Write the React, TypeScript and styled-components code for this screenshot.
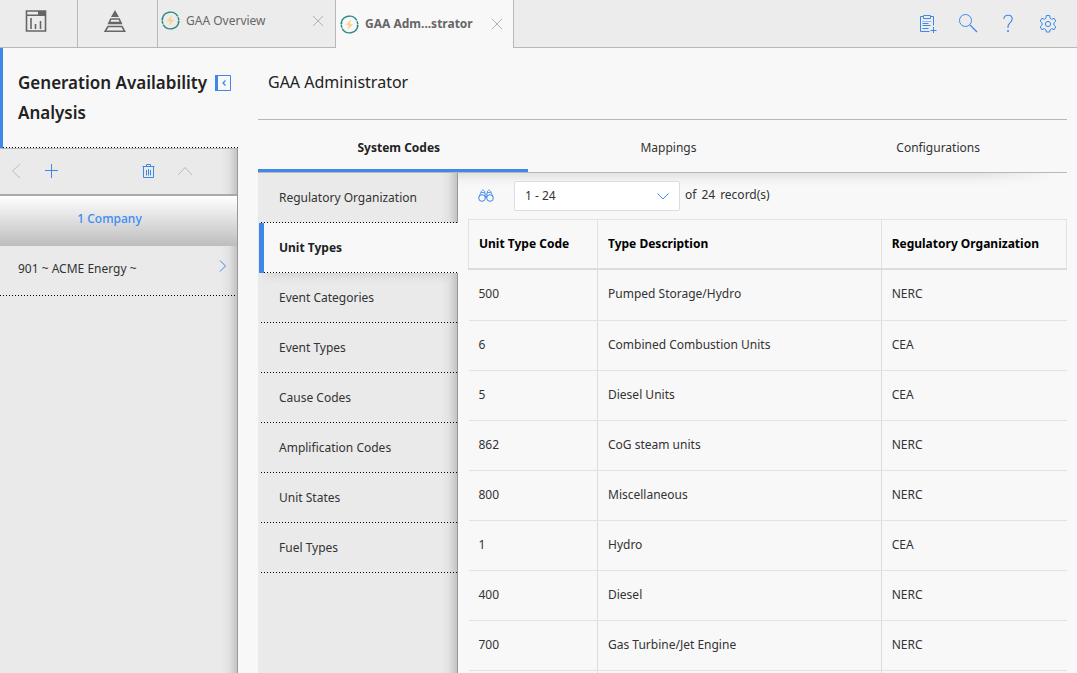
import React from "react";
import styled, { createGlobalStyle, css } from "styled-components";

const blue = "#3f87e8";
const line = "#b8b8b8";

const GlobalStyle = createGlobalStyle`
  *, *::before, *::after { box-sizing: border-box; }
  body {
    margin: 0;
    background: #f8f8f8;
    color: #333;
    font-family: "Noto Sans", sans-serif;
    font-size: 12px;
    line-height: 20px;
  }
  button, select { font: inherit; color: inherit; }
  button { border: 0; padding: 0; background: none; cursor: pointer; }
  svg { display: block; flex: none; }
  h1, h2 { margin: 0; }
`;

const Page = styled.div`
  display: flex;
  flex-direction: column;
  height: 100vh;
  overflow: hidden;
`;

const TopBar = styled.header`
  display: flex;
  flex: none;
  height: 48px;
  background: #ececec;
`;

const LauncherButton = styled.button<{ $width: number }>`
  display: flex;
  align-items: center;
  justify-content: center;
  width: ${(p) => p.$width}px;
  padding: 0 5px 6px 0;
  border-right: 1px solid ${line};
  border-bottom: 1px solid ${line};
`;

const AppTab = styled.div<{ $active?: boolean }>`
  display: flex;
  align-items: center;
  width: 178px;
  padding: 0 11px 6px 3px;
  border-right: 1px solid ${line};
  border-bottom: 1px solid ${line};
  color: #666;
  ${(p) =>
    p.$active &&
    css`
      padding: 0 10px 0 4px;
      border-bottom: 0;
      background: #f8f8f8;
      font-weight: 700;
    `}
`;

const AppTabLabel = styled.button`
  display: flex;
  flex: 1;
  align-items: center;
  gap: 6px;
  white-space: nowrap;
`;

const TopActions = styled.div`
  display: flex;
  flex: 1;
  justify-content: flex-end;
  padding-right: 9px;
  border-bottom: 1px solid ${line};
`;

const IconButton = styled.button<{ $width?: number; $muted?: boolean }>`
  display: flex;
  flex: none;
  align-items: center;
  justify-content: center;
  width: ${(p) => p.$width ?? 40}px;
  color: ${(p) => (p.$muted ? "#bcbcbc" : blue)};
`;

const Body = styled.div`
  display: flex;
  flex: 1;
  min-height: 0;
`;

const sideShade = css`
  border-right: 1px solid #999;
  background: linear-gradient(to left, rgba(0, 0, 0, 0.17), rgba(0, 0, 0, 0.04) 8px, transparent 16px) #eaeaea;
`;

const Sidebar = styled.aside`
  display: flex;
  flex: none;
  flex-direction: column;
  width: 238px;
`;

const dots = css`
  background-image: linear-gradient(to right, #000 1px, transparent 1px);
  background-position: left bottom;
  background-size: 3px 1px;
  background-repeat: repeat-x;
`;

const SidebarTitle = styled.div`
  display: flex;
  align-items: flex-start;
  justify-content: space-between;
  height: 100px;
  padding: 20px 7px 0 15px;
  border-left: 3px solid ${blue};
  ${dots}
`;

const ModuleName = styled.h1`
  color: #222;
  font-size: 17px;
  font-weight: 600;
  line-height: 30px;
`;

const CollapseButton = styled.button`
  padding-top: 7px;
  color: ${blue};
`;

const SidePanel = styled.div`
  flex: 1;
  ${sideShade}
`;

const SideToolbar = styled.div`
  display: flex;
  gap: 4px;
  height: 48px;
  padding: 0 36px 2px 0;
  border-top: 1px solid ${line};
  border-bottom: 2px solid #aaa;
`;

const ToolbarSpacer = styled.span`
  flex: 1;
`;

const LevelHeading = styled.h2`
  height: 50px;
  padding: 13px 18px 0 0;
  background: linear-gradient(#fff, #bdbdbd);
  color: #3b8cf5;
  font-size: 12px;
  font-weight: 500;
  line-height: 20px;
  text-align: center;
`;

const CompanyRow = styled.button`
  display: flex;
  align-items: center;
  justify-content: space-between;
  width: 100%;
  height: 50px;
  padding: 0 9px 4px 18px;
  text-align: left;
  ${dots}
`;

const RowArrow = styled.span`
  padding-bottom: 6px;
  color: ${blue};
`;

const Main = styled.main`
  display: flex;
  flex: 1;
  flex-direction: column;
  min-width: 0;
  padding: 0 10px 0 20px;
`;

const PageTitle = styled.h2`
  flex: none;
  height: 72px;
  padding: 24px 10px 0;
  border-bottom: 1px solid ${line};
  color: #222;
  font-size: 16px;
  font-weight: 400;
  line-height: 20px;
`;

const SectionTabs = styled.div`
  display: grid;
  flex: none;
  grid-template-columns: repeat(3, 1fr);
  height: 53px;
  border-bottom: 1px solid ${line};
`;

const SectionTab = styled.button<{ $active?: boolean }>`
  padding: 6px 0 0 12px;
  border-bottom: 3px solid ${(p) => (p.$active ? blue : "transparent")};
  color: ${(p) => (p.$active ? "#222" : "#333")};
  font-weight: ${(p) => (p.$active ? 700 : 400)};
`;

const Section = styled.div`
  display: flex;
  flex: 1;
  min-height: 0;
`;

const CodeNav = styled.nav`
  flex: none;
  width: 200px;
  padding-left: 1px;
  ${sideShade}
`;

const CodeItem = styled.button<{ $active?: boolean }>`
  display: block;
  width: calc(100% - 2px);
  height: 50px;
  margin-left: 2px;
  padding-left: 18px;
  text-align: left;
  ${dots}
  ${(p) =>
    p.$active &&
    css`
      width: calc(100% + 1px);
      margin-left: 0;
      padding-left: 15px;
      border-left: 5px solid ${blue};
      background-color: #f8f8f8;
      box-shadow: 0 10px 10px -8px rgba(0, 0, 0, 0.12);
      color: #222;
      font-weight: 700;
    `}
`;

const Records = styled.section`
  flex: 1;
  min-width: 0;
  padding-left: 10px;
  background:
    linear-gradient(to right, transparent calc(100% - 90px), #f8f8f8 calc(100% - 10px)),
    linear-gradient(rgba(0, 0, 0, 0.09), rgba(0, 0, 0, 0.02) 8px, transparent 14px);
`;

const Pager = styled.div`
  display: flex;
  align-items: center;
  height: 46px;
`;

const SelectBox = styled.div`
  display: grid;
  align-items: center;
  width: 166px;
  margin: 0 5px 0 10px;
  color: ${blue};

  & > * { grid-area: 1 / 1; }
  & > svg { justify-self: end; margin-right: 11px; pointer-events: none; }
`;

const RangeSelect = styled.select`
  height: 30px;
  padding: 0 10px;
  border: 1px solid #ddd;
  border-radius: 2px;
  background: #fff;
  color: #333;
  appearance: none;
`;

const RecordCount = styled.span`
  display: flex;
  gap: 5px;
  padding-bottom: 2px;
`;

const Table = styled.table`
  width: 100%;
  border-collapse: collapse;
  table-layout: fixed;
`;

const HeadCell = styled.th<{ $width?: string }>`
  width: ${(p) => p.$width ?? "auto"};
  height: 49px;
  padding: 0 10px;
  border: 1px solid #e2e2e2;
  border-bottom: 2px solid #dcdcdc;
  color: #000;
  font-weight: 700;
  text-align: left;
`;

const Cell = styled.td`
  height: 50px;
  padding: 0 10px 2px;
  border-bottom: 1px solid #e2e2e2;

  & + & { border-left: 1px solid #dcdcdc; }
  tr:first-child > & { height: 52px; }
`;

const Stroke = ({ size, children }: { size: number; children: React.ReactNode }) => (
  <svg width={size} height={size} viewBox={`0 0 ${size} ${size}`} fill="none" stroke="currentColor" aria-hidden="true">
    {children}
  </svg>
);

const DashboardIcon = () => (
  <svg width="22" height="22" viewBox="0 0 22 22" aria-hidden="true">
    <path d="M1.5 1h19v20h-19z" fill="none" stroke="#666" strokeWidth="1.6" />
    <path d="M13 1h8v4h-8zM1 4.6h20v1.4H1z" fill="#666" />
    <path d="M6 8v11M10.500 14v5M15.500 11v8" stroke="#666" strokeWidth="1.6" />
  </svg>
);

const PyramidIcon = () => (
  <svg width="24" height="24" viewBox="0 0 24 24" aria-hidden="true">
    <path d="M12 1l4 7H8z" fill="#666" />
    <path d="M7.8 10h8.4l1.5 3.5H6.3zM5 17.5h14l2.6 4.7H2.2z" fill="none" stroke="#666" strokeWidth="1.6" />
    <path d="M5.5 13.5h13l1 1.8h-15z" fill="#666" />
  </svg>
);

const EnergyIcon = () => (
  <svg width="19" height="19" viewBox="0 0 19 19" aria-hidden="true">
    <g fill="none" stroke="#2b8a86" strokeWidth="1.4">
      <path d="M1.2 8.2A8.4 8.4 0 0 1 16.8 5.4M17.8 10.8A8.4 8.4 0 0 1 2.2 13.6" />
      <path d="M17.1 6.2l.8 3M1.9 12.8l-.8-3" />
    </g>
    <path d="M0 7.8h2.8L1.3 9.8zM19 11.2h-2.8l1.5-2z" fill="#2b8a86" />
    <path d="M10.8 4.5L5.8 10h3l-1 4.5L13.2 9h-3z" fill="#ffd184" />
  </svg>
);

const CloseIcon = () => (
  <svg width="12" height="12" viewBox="0 0 12 12" stroke="#b0b0b0" aria-hidden="true">
    <path d="M1 1l10 10M11 1L1 11" />
  </svg>
);

const ClipboardIcon = () => (
  <Stroke size={20}>
    <path d="M5.5 2.5h-3v15h9M12.5 2.5h3v9M5.5 1.5h7v3h-7zM4.5 9.5h6M4.5 11.5h8M4.5 14.5h6" />
    <path d="M4.5 7.5h9" opacity=".5" />
    <path d="M15.5 13v6M12.5 16.5h6" />
  </Stroke>
);

const SearchIcon = () => (
  <Stroke size={20}>
    <circle cx="7.5" cy="6.5" r="6" />
    <path d="M12 11l7 7" strokeWidth="1.3" />
  </Stroke>
);

const HelpIcon = () => (
  <Stroke size={20}>
    <path d="M5.8 5C6 2.6 7.6 1.2 10 1.2s4.2 1.5 4.2 3.8c0 3.400-4.200 3.800-4.200 7.700v1.300" strokeWidth="1.1" />
    <circle cx="10" cy="17" r="1" fill="currentColor" stroke="none" />
  </Stroke>
);

const GearIcon = () => (
  <Stroke size={20}>
    <path
      d="M8.3 1.5h3.4l.4 2.8 1.7 1 2.400-1 1.600 2.900-1.900 1.700v2.200l1.900 1.700-1.600 2.900-2.400-1-1.700 1-.4 2.300H8.300l-.4-2.300-1.700-1-2.400 1-1.600-2.900 1.900-1.700V8.900L2.200 7.200l1.600-2.900 2.400 1 1.700-1z"
      strokeLinejoin="round"
    />
    <circle cx="10" cy="10" r="2.6" />
  </Stroke>
);

const PanelIcon = () => (
  <Stroke size={16}>
    <path d="M.5.5h15v15H.5z" />
    <path d="M1.5 0v16" strokeWidth="3" />
    <path d="M10.5 5.5L8 8l2.5 2.5" strokeWidth="1.3" />
  </Stroke>
);

const LeftIcon = () => (
  <Stroke size={14}>
    <path d="M11 0L3.500 7l7.500 7" />
  </Stroke>
);

const UpIcon = () => (
  <Stroke size={16}>
    <path d="M1 12l7-7.5 7 7.5" />
  </Stroke>
);

const RightIcon = () => (
  <Stroke size={12}>
    <path d="M4 .5L9.5 6 4 11.5" />
  </Stroke>
);

const DownIcon = () => (
  <Stroke size={12}>
    <path d="M.5 3.5L6 9l5.5-5.5" />
  </Stroke>
);

const PlusIcon = () => (
  <Stroke size={14}>
    <path d="M6.5 0v14M0 6.5h13" stroke={blue} />
  </Stroke>
);

const TrashIcon = () => (
  <Stroke size={14}>
    <path d="M.5 2.5h12M4.5 2.5v-2h4v2M1.5 2.5v11h10v-11M4.5 6v5.500M6.500 5v6.500M8.500 6v5.500" />
  </Stroke>
);

const BinocularsIcon = () => (
  <Stroke size={16}>
    <circle cx="4" cy="10" r="3.3" />
    <circle cx="12" cy="10" r="3.3" />
    <path d="M1 9l2.500-6Q5 .5 6.500 3l1 6.500M15 9l-2.500-6Q11 .5 9.500 3l-1 6.500M3 4.500h4M13 4.500H9M7 6h2M7 9h2" strokeWidth=".8" />
  </Stroke>
);

const codeTypes = [
  "Regulatory Organization",
  "Unit Types",
  "Event Categories",
  "Event Types",
  "Cause Codes",
  "Amplification Codes",
  "Unit States",
  "Fuel Types",
];

const unitTypes = [
  ["500", "Pumped Storage/Hydro", "NERC"],
  ["6", "Combined Combustion Units", "CEA"],
  ["5", "Diesel Units", "CEA"],
  ["862", "CoG steam units", "NERC"],
  ["800", "Miscellaneous", "NERC"],
  ["1", "Hydro", "CEA"],
  ["400", "Diesel", "NERC"],
  ["700", "Gas Turbine/Jet Engine", "NERC"],
  ["", "", ""],
];

export default function App() {
  return (
    <Page>
      <GlobalStyle />
      <TopBar>
        <LauncherButton $width={78} aria-label="Dashboard"><DashboardIcon /></LauncherButton>
        <LauncherButton $width={80} aria-label="Hierarchy"><PyramidIcon /></LauncherButton>
        <AppTab>
          <AppTabLabel><EnergyIcon />GAA Overview</AppTabLabel>
          <button aria-label="Close GAA Overview"><CloseIcon /></button>
        </AppTab>
        <AppTab $active>
          <AppTabLabel><EnergyIcon />GAA Adm...strator</AppTabLabel>
          <button aria-label="Close GAA Administrator"><CloseIcon /></button>
        </AppTab>
        <TopActions>
          <IconButton aria-label="Add note"><ClipboardIcon /></IconButton>
          <IconButton aria-label="Search"><SearchIcon /></IconButton>
          <IconButton aria-label="Help"><HelpIcon /></IconButton>
          <IconButton aria-label="Settings"><GearIcon /></IconButton>
        </TopActions>
      </TopBar>
      <Body>
        <Sidebar>
          <SidebarTitle>
            <ModuleName>Generation Availability Analysis</ModuleName>
            <CollapseButton aria-label="Collapse panel"><PanelIcon /></CollapseButton>
          </SidebarTitle>
          <SidePanel>
            <SideToolbar>
              <IconButton $width={32} $muted aria-label="Back"><LeftIcon /></IconButton>
              <IconButton $width={32} aria-label="Add"><PlusIcon /></IconButton>
              <ToolbarSpacer />
              <IconButton $width={32} aria-label="Delete"><TrashIcon /></IconButton>
              <IconButton $width={32} $muted aria-label="Up"><UpIcon /></IconButton>
            </SideToolbar>
            <LevelHeading>1 Company</LevelHeading>
            <CompanyRow>
              901 ~ ACME Energy ~
              <RowArrow><RightIcon /></RowArrow>
            </CompanyRow>
          </SidePanel>
        </Sidebar>
        <Main>
          <PageTitle>GAA Administrator</PageTitle>
          <SectionTabs>
            <SectionTab $active>System Codes</SectionTab>
            <SectionTab>Mappings</SectionTab>
            <SectionTab>Configurations</SectionTab>
          </SectionTabs>
          <Section>
            <CodeNav>
              {codeTypes.map((name) => (
                <CodeItem key={name} $active={name === "Unit Types"}>{name}</CodeItem>
              ))}
            </CodeNav>
            <Records>
              <Pager>
                <IconButton $width={36} aria-label="Find"><BinocularsIcon /></IconButton>
                <SelectBox>
                  <RangeSelect aria-label="Record range"><option>1 - 24</option></RangeSelect>
                  <DownIcon />
                </SelectBox>
                <RecordCount><span>of</span><span>24</span><span>record(s)</span></RecordCount>
              </Pager>
              <Table>
                <thead>
                  <tr>
                    <HeadCell $width="129px">Unit Type Code</HeadCell>
                    <HeadCell>Type Description</HeadCell>
                    <HeadCell $width="31%">Regulatory Organization</HeadCell>
                  </tr>
                </thead>
                <tbody>
                  {unitTypes.map(([code, description, organization], index) => (
                    <tr key={index}>
                      <Cell>{code}</Cell>
                      <Cell>{description}</Cell>
                      <Cell>{organization}</Cell>
                    </tr>
                  ))}
                </tbody>
              </Table>
            </Records>
          </Section>
        </Main>
      </Body>
    </Page>
  );
}
